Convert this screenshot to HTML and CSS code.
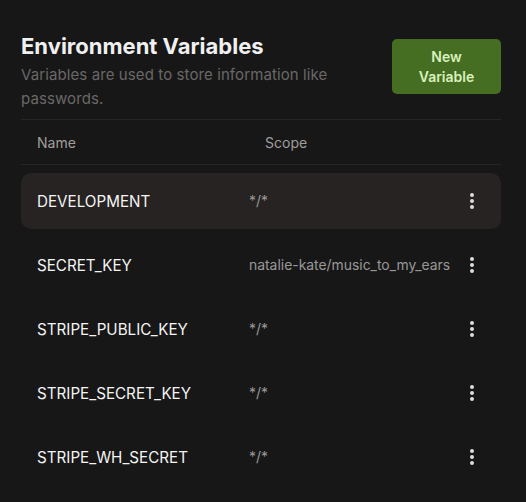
FILE: index.html
```html
<!DOCTYPE html>
<html>
<head>
<meta charset="utf-8">
<link rel="stylesheet" href="styles.css">
</head>
<body>
<div class="panel">
  <div class="head">
    <div class="head-text">
      <h1 class="title">Environment Variables</h1>
      <p class="desc">Variables are used to store information like passwords.</p>
    </div>
    <button class="btn">New<br>Variable</button>
  </div>
  <div class="thead">
    <span class="th-name">Name</span>
    <span class="th-scope">Scope</span>
  </div>
  <div class="rows">
    <div class="row active"><span class="name">DEVELOPMENT</span><span class="scope">*/*</span><span class="menu"><i></i><i></i><i></i></span></div>
    <div class="row"><span class="name">SECRET_KEY</span><span class="scope">natalie-kate/music_to_my_ears</span><span class="menu"><i></i><i></i><i></i></span></div>
    <div class="row"><span class="name">STRIPE_PUBLIC_KEY</span><span class="scope">*/*</span><span class="menu"><i></i><i></i><i></i></span></div>
    <div class="row"><span class="name">STRIPE_SECRET_KEY</span><span class="scope">*/*</span><span class="menu"><i></i><i></i><i></i></span></div>
    <div class="row"><span class="name">STRIPE_WH_SECRET</span><span class="scope">*/*</span><span class="menu"><i></i><i></i><i></i></span></div>
  </div>
</div>
</body>
</html>
```
FILE: styles.css
```css
html, body {
  margin: 0;
  background: #171717;
  font-family: Inter, "Noto Sans", sans-serif;
  color: #f2f2f2;
}
.panel {
  padding: 31px 25px 0 21px;
}
.head {
  display: flex;
  justify-content: space-between;
  align-items: flex-start;
  padding-bottom: 8px;
  border-bottom: 1px solid #262626;
}
.title {
  margin: 0;
  font-size: 22px;
  line-height: 30px;
  font-weight: 700;
  color: #f0f0f0;
}
.desc {
  margin: 2px 0 0;
  width: 320px;
  font-size: 15px;
  letter-spacing: 0.1px;
  line-height: 24px;
  color: #6a6867;
}
.btn {
  margin-top: 8px;
  width: 109px;
  height: 55px;
  border: 0;
  border-radius: 5px;
  background: #456e22;
  color: #d8f1bd;
  font-family: Inter, "Noto Sans", sans-serif;
  font-size: 14px;
  font-weight: 600;
  line-height: 20px;
  padding: 0;
}
.thead {
  display: flex;
  height: 44px;
  align-items: center;
  font-size: 14px;
  color: #a09e9c;
  border-bottom: 1px solid #262626;
}
.th-name {
  padding-left: 16px;
  width: 228px;
}
.rows {
  display: flex;
  flex-direction: column;
  gap: 8px;
  padding-top: 8px;
}
.row {
  display: flex;
  align-items: center;
  height: 56px;
  border-radius: 10px;
  padding-left: 16px;
}
.row.active {
  background: #262322;
}
.name {
  width: 212px;
  font-size: 15.2px;
  color: #f4f4f4;
}
.scope {
  flex: 1;
  font-size: 13.9px;
  color: #9a9897;
}
.menu {
  width: 31px;
  display: flex;
  flex-direction: column;
  align-items: flex-start;
  gap: 2px;
}
.menu i {
  display: block;
  width: 4px;
  height: 4px;
  border-radius: 50%;
  background: #dcdcdc;
}
```
